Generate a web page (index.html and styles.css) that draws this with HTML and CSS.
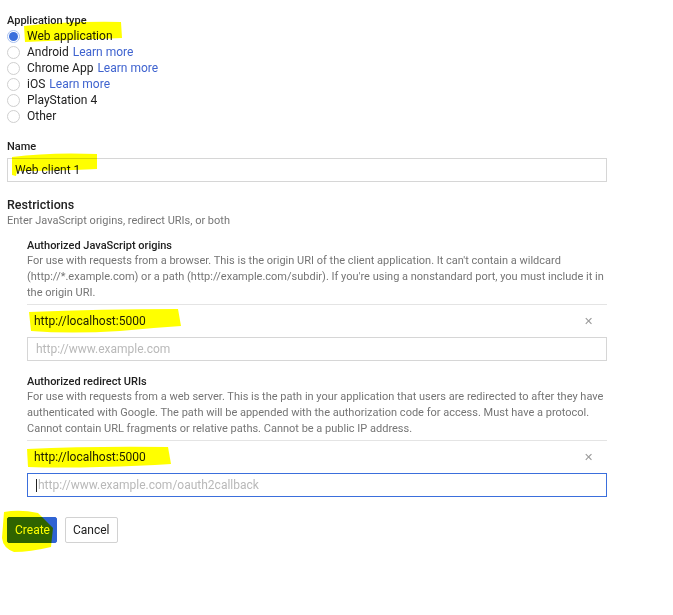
FILE: index.html
```html
<!DOCTYPE html>
<html>
<head>
<meta charset="utf-8">
<link rel="stylesheet" href="styles.css">
</head>
<body>
<div class="page">
  <div class="label">Application type</div>
  <ul class="radios">
    <li><span class="radio on"></span>Web application</li>
    <li><span class="radio"></span>Android <a class="link">Learn more</a></li>
    <li><span class="radio"></span>Chrome App <a class="link">Learn more</a></li>
    <li><span class="radio"></span>iOS <a class="link">Learn more</a></li>
    <li><span class="radio"></span>PlayStation 4</li>
    <li><span class="radio"></span>Other</li>
  </ul>

  <div class="label name-label">Name</div>
  <div class="input">Web client 1</div>

  <div class="section-title">Restrictions</div>
  <div class="hint">Enter JavaScript origins, redirect URIs, or both</div>

  <div class="group first">
    <div class="group-title">Authorized JavaScript origins</div>
    <p class="desc">For use with requests from a browser. This is the origin URI of the client application. It can't contain a wildcard (http://*.example.com) or a path (http://example.com/subdir). If you're using a nonstandard port, you must include it in the origin URI.</p>
    <div class="entry"><span>http://localhost:5000</span><span class="x">&#x2715;</span></div>
    <div class="input placeholder">http://www.example.com</div>
  </div>

  <div class="group second">
    <div class="group-title">Authorized redirect URIs</div>
    <p class="desc">For use with requests from a web server. This is the path in your application that users are redirected to after they have authenticated with Google. The path will be appended with the authorization code for access. Must have a protocol. Cannot contain URL fragments or relative paths. Cannot be a public IP address.</p>
    <div class="entry"><span>http://localhost:5000</span><span class="x">&#x2715;</span></div>
    <div class="input placeholder focus"><span class="caret"></span>http://www.example.com/oauth2callback</div>
  </div>

  <div class="buttons">
    <button class="btn primary">Create</button>
    <button class="btn">Cancel</button>
  </div>

  <svg class="marks" width="673" height="615" viewBox="0 0 673 615">
    <path d="M24 26 Q70 21 121 22 L122 38 Q70 40 25 42 Z"/>
    <path d="M12 157 Q50 152 97 154 L97 169 Q50 171 17 171 L16 176 L12 175 Z"/>
    <path d="M29 312 Q100 309 178 309 L181 326 Q150 328 120 331 Q70 334 31 331 Z"/>
    <path d="M27 449 Q90 446 168 447 L171 464 Q140 466 100 467 Q60 468 28 467 Z"/>
    <path d="M4 512 Q20 509 38 513 L53 528 L51 547 Q30 552 14 552 Q3 548 2 538 Z"/>
  </svg>
</div>
</body>
</html>
```

FILE: styles.css
```css
html, body {
  margin: 0;
  padding: 0;
  background: #fff;
}
.page {
  position: relative;
  width: 673px;
  height: 615px;
  box-sizing: border-box;
  padding: 14px 0 0 7px;
  font-family: Roboto, "Liberation Sans", Arial, sans-serif;
  font-size: 12px;
  color: #212121;
}
.label {
  font-size: 11px;
  font-weight: 500;
  line-height: 14px;
}
.radios {
  list-style: none;
  margin: 0;
  padding: 0;
}
.radios li {
  display: flex;
  align-items: center;
  height: 16px;
  line-height: 16px;
  font-size: 12px;
}
.radio {
  width: 11px;
  height: 11px;
  border: 1px solid #cfcfcf;
  border-radius: 50%;
  margin-right: 7px;
  box-sizing: content-box;
  flex: none;
  position: relative;
}
.radio.on {
  border-color: #a9c1f0;
}
.radio.on::after {
  content: "";
  position: absolute;
  left: 1px;
  top: 1px;
  width: 9px;
  height: 9px;
  border-radius: 50%;
  background: #3b6fdc;
}
.link {
  color: #3f63cf;
  margin-left: 4px;
}
.name-label {
  margin-top: 16px;
}
.input {
  box-sizing: border-box;
  width: 600px;
  height: 24px;
  margin-top: 4px;
  border: 1px solid #d6d6d6;
  padding: 0 7px;
  line-height: 22px;
  font-size: 12px;
  color: #212121;
}
.section-title {
  margin-top: 15px;
  font-size: 12.5px;
  font-weight: 500;
  line-height: 16px;
}
.hint {
  font-size: 11px;
  line-height: 16px;
  color: #757575;
}
.group {
  margin-left: 20px;
  width: 580px;
}
.group.first { margin-top: 10px; }
.group.second { margin-top: 14px; }
.group-title {
  font-size: 11px;
  font-weight: 500;
  line-height: 14px;
}
.desc {
  margin: 0;
  font-size: 11px;
  line-height: 16px;
  color: #757575;
  padding-bottom: 3px;
  border-bottom: 1px solid #e4e4e4;
}
.entry {
  display: flex;
  justify-content: space-between;
  align-items: center;
  height: 32px;
  padding: 0 14px 0 7px;
  font-size: 12px;
}
.x {
  color: #9a9a9a;
  font-size: 11px;
}
.group .input {
  width: 580px;
  margin-top: 0;
}
.placeholder {
  color: #b9b9b9;
  padding-left: 8px;
}
.focus {
  border-color: #3b6fdc;
  display: flex;
  align-items: center;
}
.caret {
  display: inline-block;
  width: 1px;
  height: 13px;
  background: #212121;
  margin-right: 1px;
}
.buttons {
  display: flex;
  gap: 8px;
  margin-top: 20px;
}
.btn {
  height: 26px;
  padding: 0 7px;
  border: 1px solid #d2d2d2;
  border-radius: 2px;
  background: #fff;
  font-family: Roboto, "Liberation Sans", Arial, sans-serif;
  font-size: 12px;
  color: #212121;
}
.btn.primary {
  width: 50px;
  background: #2f63d3;
  border-color: #2f63d3;
  color: #fff;
}
.marks {
  position: absolute;
  left: 0;
  top: 0;
  fill: #ffff00;
  mix-blend-mode: multiply;
  pointer-events: none;
}
```
